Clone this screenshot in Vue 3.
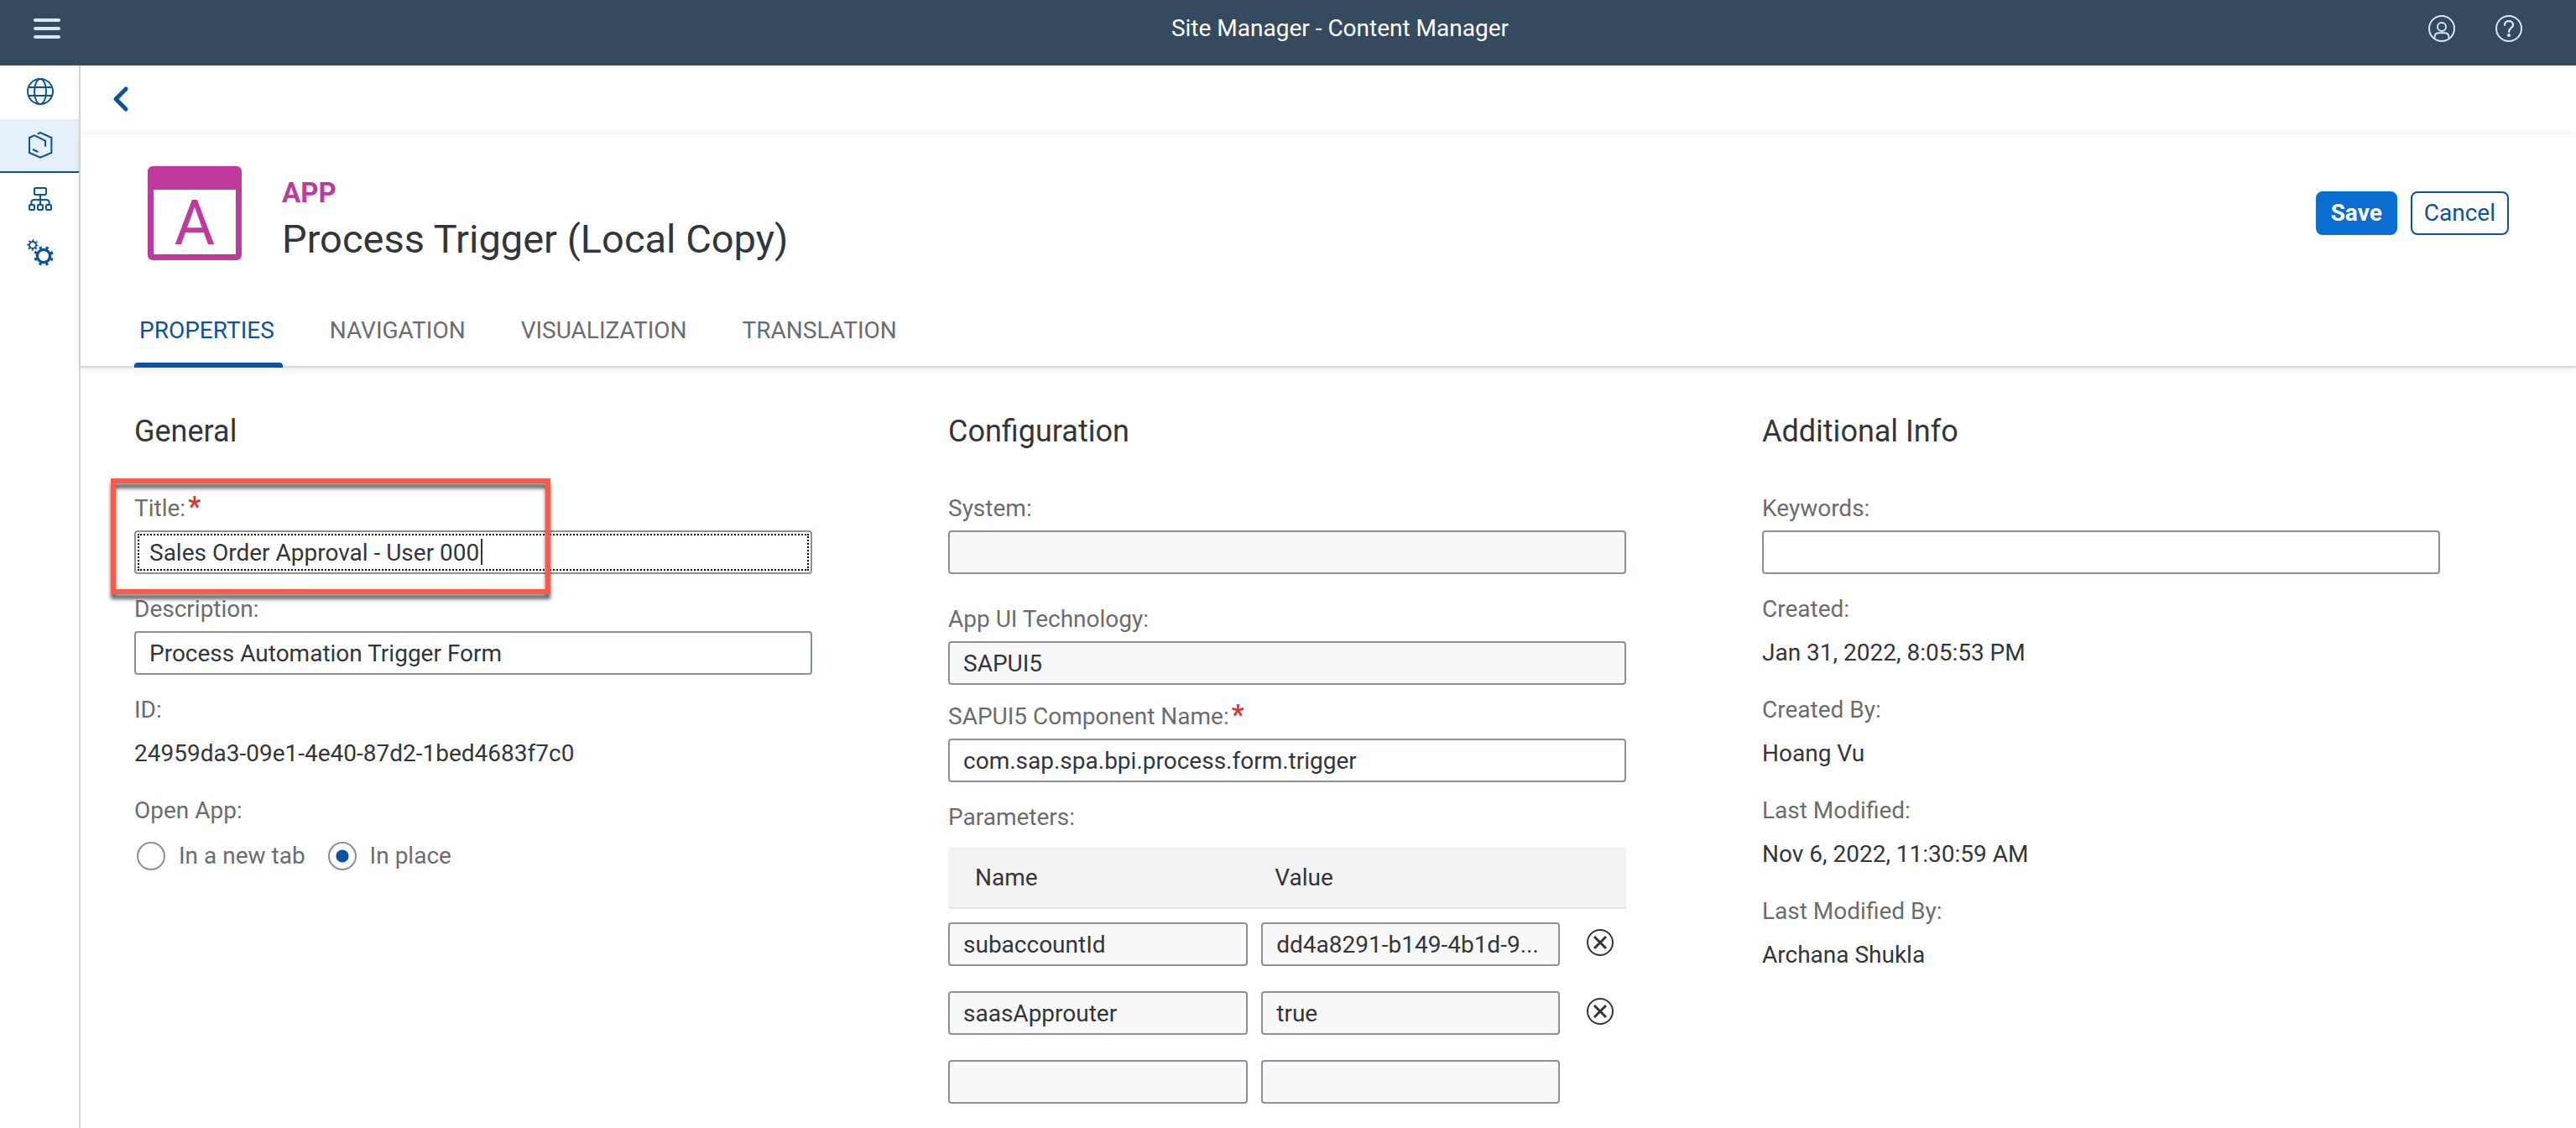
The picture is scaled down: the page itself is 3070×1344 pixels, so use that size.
<script setup>
import { ref } from 'vue'

const navItems = [
  { id: 'sites', label: 'Site Directory' },
  { id: 'content', label: 'Content Manager' },
  { id: 'channels', label: 'Channel Manager' },
  { id: 'settings', label: 'Settings' },
]
const activeNav = ref('content')

const tabs = ['PROPERTIES', 'NAVIGATION', 'VISUALIZATION', 'TRANSLATION']
const activeTab = ref('PROPERTIES')

const title = ref('Sales Order Approval - User 000')
const description = ref('Process Automation Trigger Form')
const component = ref('com.sap.spa.bpi.process.form.trigger')
const keywords = ref('')
const openIn = ref('place')

const parameters = ref([
  { name: 'subaccountId', value: 'dd4a8291-b149-4b1d-9...', removable: true },
  { name: 'saasApprouter', value: 'true', removable: true },
  { name: '', value: '', removable: false },
])

const auditInfo = [
  { label: 'Created:', value: 'Jan 31, 2022, 8:05:53 PM' },
  { label: 'Created By:', value: 'Hoang Vu' },
  { label: 'Last Modified:', value: 'Nov 6, 2022, 11:30:59 AM' },
  { label: 'Last Modified By:', value: 'Archana Shukla' },
]
</script>

<template>
  <div class="app">
    <header class="shell">
      <button class="icon-button menu" aria-label="Menu">
        <svg width="32" height="32" viewBox="0 0 32 32" stroke="currentColor" stroke-width="4" stroke-linecap="round">
          <path d="M2 6H30M2 16H30M2 26H30" />
        </svg>
      </button>
      <div class="shell-title">Site Manager - Content Manager</div>
      <div class="shell-actions">
        <button class="icon-button" aria-label="User">
          <svg width="32" height="32" viewBox="0 0 96 96" fill="none" stroke="currentColor" stroke-width="6">
            <circle cx="48" cy="48" r="45" />
            <circle cx="48" cy="42" r="15" />
            <path d="M22 83C22 70 28 64 37 64H59C68 64 74 70 74 83" />
          </svg>
        </button>
        <button class="icon-button" aria-label="Help">
          <svg width="32" height="32" viewBox="0 0 96 96" fill="none" stroke="currentColor" stroke-width="6">
            <circle cx="48" cy="48" r="45" />
            <path d="M33 35C33 17 63 17 63 35C63 46 48 47 48 59" stroke-width="7" stroke-linecap="round" />
            <circle cx="48" cy="72" r="6" fill="currentColor" stroke="none" />
          </svg>
        </button>
      </div>
    </header>

    <div class="body">
      <nav class="side">
        <button
          v-for="item in navItems"
          :key="item.id"
          class="side-item"
          :class="{ active: item.id === activeNav }"
          :aria-label="item.label"
          @click="activeNav = item.id"
        >
          <svg width="32" height="32" viewBox="0 0 96 96" fill="none" stroke="currentColor" stroke-width="6">
            <g v-if="item.id === 'sites'">
              <circle cx="48" cy="48" r="45" />
              <ellipse cx="48" cy="48" rx="21" ry="45" />
              <path d="M6 33H90M6 63H90" />
            </g>
            <path
              v-else-if="item.id === 'content'"
              d="M38 8L48 3L88 21V75L48 92L9 75V21L27 13L66 32V53M21 63L40 72"
            />
            <g v-else-if="item.id === 'channels'">
              <rect x="27" y="9" width="42" height="24" rx="3" />
              <rect x="9" y="69" width="18" height="18" rx="3" />
              <rect x="39" y="69" width="18" height="18" rx="3" />
              <rect x="69" y="69" width="18" height="18" rx="3" />
              <path d="M48 33V69M16 69V62Q16 51 27 51H69Q80 51 80 62V69" />
            </g>
            <g v-else>
              <circle cx="21" cy="21" r="12" />
              <circle cx="21" cy="21" r="17" stroke-width="7" pathLength="80" stroke-dasharray="4 6" stroke-dashoffset="2" />
              <circle cx="60" cy="60" r="23" stroke-width="10" />
              <circle cx="60" cy="60" r="31" stroke-width="9" pathLength="80" stroke-dasharray="4 6" stroke-dashoffset="-3" />
            </g>
          </svg>
        </button>
      </nav>

      <main class="main">
        <div class="back-bar">
          <button class="icon-button" aria-label="Back">
            <svg width="32" height="32" viewBox="0 0 32 32" fill="none" stroke="currentColor" stroke-width="5" stroke-linecap="round" stroke-linejoin="round">
              <path d="M21 4L9 16L21 28" />
            </svg>
          </button>
        </div>

        <section class="page-header">
          <div class="identity">
            <svg class="app-icon" width="112" height="112" viewBox="0 0 112 112">
              <rect width="112" height="112" rx="6" fill="#c0399f" />
              <rect x="7" y="28" width="98" height="77" fill="#ffffff" />
              <text class="app-letter" x="56" y="93" text-anchor="middle">A</text>
            </svg>
            <div class="names">
              <div class="kind">APP</div>
              <h1>Process Trigger (Local Copy)</h1>
            </div>
            <div class="actions">
              <button class="btn primary">Save</button>
              <button class="btn">Cancel</button>
            </div>
          </div>
          <div class="tabs" role="tablist">
            <button
              v-for="tab in tabs"
              :key="tab"
              class="tab"
              :class="{ active: tab === activeTab }"
              role="tab"
              :aria-selected="tab === activeTab"
              @click="activeTab = tab"
            >{{ tab }}</button>
          </div>
        </section>

        <form class="columns" @submit.prevent>
          <section class="column">
            <h2>General</h2>
            <div class="field highlighted">
              <label for="title">Title:<span class="required">*</span></label>
              <div class="editing">
                <input id="title" v-model="title" class="input focused" type="text" />
                <span class="caret"></span>
              </div>
              <div class="callout"></div>
            </div>
            <div class="field">
              <label for="description">Description:</label>
              <input id="description" v-model="description" class="input" type="text" />
            </div>
            <div class="field">
              <div class="label">ID:</div>
              <div class="value">24959da3-09e1-4e40-87d2-1bed4683f7c0</div>
            </div>
            <div class="field" role="radiogroup" aria-labelledby="open-app">
              <div id="open-app" class="label">Open App:</div>
              <div class="radios">
                <label class="radio"><input v-model="openIn" type="radio" name="open" value="tab" />In a new tab</label>
                <label class="radio"><input v-model="openIn" type="radio" name="open" value="place" />In place</label>
              </div>
            </div>
          </section>

          <section class="column">
            <h2>Configuration</h2>
            <div class="field loose">
              <label for="system">System:</label>
              <input id="system" class="input" type="text" value="" disabled />
            </div>
            <div class="field tight">
              <label for="technology">App UI Technology:</label>
              <input id="technology" class="input" type="text" value="SAPUI5" disabled />
            </div>
            <div class="field">
              <label for="component">SAPUI5 Component Name:<span class="required">*</span></label>
              <input id="component" v-model="component" class="input" type="text" />
            </div>
            <div id="parameters" class="label">Parameters:</div>
            <table class="parameters" aria-labelledby="parameters">
              <colgroup>
                <col class="col-name" />
                <col class="col-value" />
                <col />
              </colgroup>
              <thead>
                <tr><th>Name</th><th>Value</th><th></th></tr>
              </thead>
              <tbody>
                <tr v-for="(row, i) in parameters" :key="i">
                  <td><input class="input" type="text" :value="row.name" aria-label="Name" disabled /></td>
                  <td class="cell-value"><input class="input" type="text" :value="row.value" aria-label="Value" disabled /></td>
                  <td>
                    <button v-if="row.removable" type="button" class="icon-button remove" aria-label="Remove">
                      <svg width="32" height="32" viewBox="0 0 32 32" fill="none" stroke="currentColor" stroke-width="2">
                        <circle cx="16" cy="16" r="15" />
                        <path d="M9 9L23 23M23 9L9 23" stroke-width="3" />
                      </svg>
                    </button>
                  </td>
                </tr>
              </tbody>
            </table>
          </section>

          <section class="column">
            <h2>Additional Info</h2>
            <div class="field">
              <label for="keywords">Keywords:</label>
              <input id="keywords" v-model="keywords" class="input" type="text" />
            </div>
            <div v-for="item in auditInfo" :key="item.label" class="field">
              <div class="label">{{ item.label }}</div>
              <div class="value">{{ item.value }}</div>
            </div>
          </section>
        </form>
      </main>
    </div>
  </div>
</template>

<style>
body {
  margin: 0;
  background: #ffffff;
}
</style>

<style scoped>
.app {
  display: flex;
  flex-direction: column;
  min-height: 100vh;
  font-family: Roboto, "Liberation Sans", sans-serif;
  font-size: 28px;
  line-height: 32px;
  color: #32363a;
}

.app * {
  box-sizing: border-box;
}

button,
input {
  font: inherit;
  margin: 0;
}

button {
  cursor: pointer;
}

.icon-button {
  display: flex;
  flex: none;
  align-items: center;
  justify-content: center;
  width: 48px;
  height: 48px;
  padding: 0;
  border: 0;
  background: none;
  color: inherit;
}

.shell {
  display: grid;
  grid-template-columns: 308px 1fr 184px;
  align-items: center;
  height: 78px;
  padding-bottom: 10px;
  background: #354a5f;
  color: #d1e8ff;
}

.menu {
  margin-left: 32px;
}

.shell-title {
  text-align: center;
  color: #ffffff;
}

.shell-actions {
  display: flex;
  justify-content: flex-end;
  gap: 32px;
  padding-right: 56px;
}

.body {
  display: flex;
  flex: 1;
}

.side {
  flex: none;
  width: 96px;
  border-right: 2px solid #d9d9d9;
}

.side-item {
  display: flex;
  align-items: center;
  justify-content: center;
  width: 100%;
  height: 64px;
  padding: 0 0 0 2px;
  border: 0;
  border-bottom: 2px solid transparent;
  background: none;
  color: #0854a0;
}

.side-item.active {
  border-bottom-color: #0854a0;
  background: #e5f0fa;
}

.main {
  flex: 1;
  min-width: 0;
}

.back-bar {
  display: flex;
  align-items: center;
  height: 80px;
  padding-left: 25px;
  box-shadow: 0 2px 8px rgba(0, 0, 0, 0.05);
  color: #0854a0;
}

.page-header {
  padding: 40px 80px 0 64px;
  border-bottom: 2px solid #d9d9d9;
  box-shadow: 0 2px 8px rgba(0, 0, 0, 0.1);
}

.identity {
  display: flex;
  padding-left: 16px;
}

.app-icon {
  flex: none;
}

.app-letter {
  font-size: 74px;
  font-weight: 400;
  fill: #c0399f;
}

.names {
  flex: 1;
  padding: 12px 0 0 48px;
}

.kind {
  font-size: 33px;
  line-height: 40px;
  font-weight: 700;
  color: #c0399f;
}

h1 {
  margin: 6px 0 0;
  font-size: 47px;
  line-height: 58px;
  font-weight: 400;
}

.actions {
  display: flex;
  align-items: flex-start;
  gap: 16px;
  padding-top: 30px;
}

.btn {
  height: 52px;
  padding: 0 14px;
  border: 2px solid #0854a0;
  border-radius: 8px;
  background: #ffffff;
  color: #0854a0;
}

.btn.primary {
  padding: 0 16px;
  border-color: #0a6ed1;
  background: #0a6ed1;
  font-weight: 700;
  color: #ffffff;
}

.tabs {
  display: flex;
  gap: 50px;
  margin: 48px 0 -2px;
}

.tab {
  height: 76px;
  padding: 0 10px 6px 6px;
  border: 0;
  border-bottom: 6px solid transparent;
  background: none;
  color: #6a6d70;
}

.tab.active {
  position: relative;
  color: #0854a0;
}

.tab.active::after {
  content: "";
  position: absolute;
  left: 0;
  right: 0;
  bottom: -6px;
  height: 6px;
  border-radius: 4px 4px 0 0;
  background: #0854a0;
}

.columns {
  display: grid;
  grid-template-columns: repeat(3, minmax(0, 1fr));
  padding: 54px 0 24px 64px;
}

.column {
  width: calc(100% * 5 / 6);
}

h2 {
  margin: 0 0 54px;
  font-size: 36px;
  line-height: 44px;
  font-weight: 400;
}

.field {
  display: flex;
  flex-direction: column;
  gap: 10px;
  margin-bottom: 26px;
}

.field.loose {
  margin-bottom: 38px;
}

.field.tight {
  margin-bottom: 22px;
}

label,
.label {
  color: #6a6d70;
}

.required {
  margin-left: 3px;
  font-size: 33px;
  line-height: 0;
  font-weight: 700;
  color: #d03a38;
}

.input {
  display: block;
  width: 100%;
  height: 52px;
  padding: 0 8px 0 16px;
  border: 2px solid #89919a;
  border-radius: 4px;
  background: #ffffff;
  color: #32363a;
  text-overflow: ellipsis;
}

.input:disabled {
  background: #f8f8f8;
  opacity: 1;
}

.focused {
  outline: 2px dotted #000000;
  outline-offset: -6px;
}

.value {
  line-height: 52px;
}

.highlighted,
.editing {
  position: relative;
}

.caret {
  position: absolute;
  top: 10px;
  left: 413px;
  width: 2px;
  height: 31px;
  background: #32363a;
}

.callout {
  position: absolute;
  z-index: 1;
  top: -20px;
  left: -28px;
  width: 524px;
  height: 138px;
  border: 6px solid #ff594b;
  filter: drop-shadow(0 6px 2px rgba(0, 0, 0, 0.6));
  pointer-events: none;
}

.radios {
  display: flex;
  align-items: center;
  gap: 24px;
  height: 56px;
}

.radio {
  display: flex;
  align-items: center;
  gap: 16px;
}

.radio input {
  appearance: none;
  width: 34px;
  height: 34px;
  margin-left: 3px;
  border: 2px solid #89919a;
  border-radius: 50%;
  background: #ffffff;
}

.radio input:checked {
  background: radial-gradient(circle, #0854a0 7px, #ffffff 8px);
}

.parameters {
  width: 100%;
  margin-top: 20px;
  border-collapse: collapse;
  table-layout: fixed;
}

.col-name {
  width: 44.2%;
}

.col-value {
  width: 46%;
}

th {
  height: 72px;
  padding: 0 0 0 32px;
  border-bottom: 2px solid #e5e5e5;
  background: #f2f2f2;
  font-weight: 400;
  text-align: left;
}

td {
  padding: 16px 0 14px;
  vertical-align: top;
}

tbody tr:last-child td {
  padding-bottom: 0;
}

.cell-value {
  padding-left: 16px;
}

.remove {
  margin-left: 24px;
}
</style>
